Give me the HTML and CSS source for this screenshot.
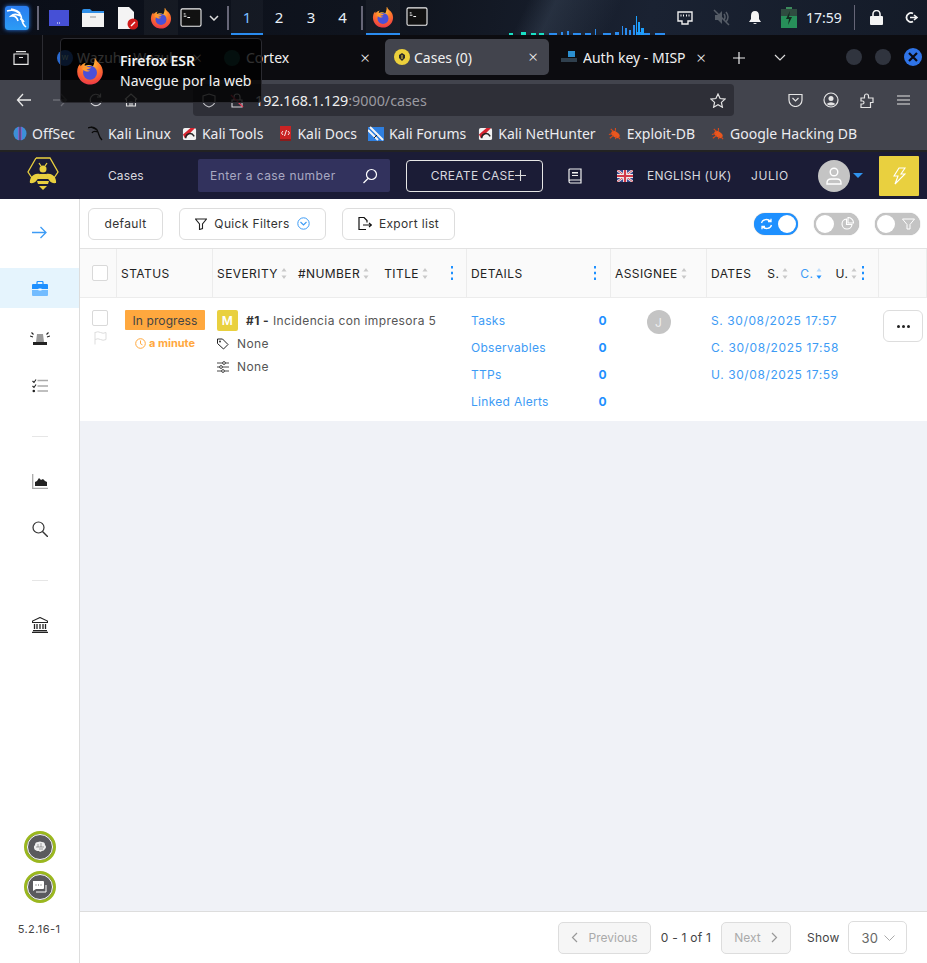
FILE: index.html
```html
<!DOCTYPE html>
<html lang="en">
<head>
    <meta charset="UTF-8">
    <meta name="viewport" content="width=device-width, initial-scale=1.0">
    <title>Cases (0)</title>
    <link rel="stylesheet" href="styles.css">
</head>
<body>

<svg class="defs" width="0" height="0">
    <defs>
        <radialGradient id="foxGrad" cx="0.5" cy="0.2" r="0.9">
            <stop offset="0" stop-color="#ffd23c"/>
            <stop offset="0.45" stop-color="#ff7a2a"/>
            <stop offset="1" stop-color="#e8284e"/>
        </radialGradient>
        <symbol id="firefox" viewBox="0 0 24 24">
            <path fill="url(#foxGrad)" d="M16.5 1c.6 2 2 3 3.500 4.500C22 7.500 23 10 23 13a11 11 0 1 1-21-5l1.500-2 .5 2c1-1.500 2.500-2.500 4.500-3-1 1-1.200 1.800-1 2.500 2-1 5-1 7 .5 1-2 1.500-4 1.500-7z"/>
            <circle cx="12" cy="13.500" r="6" fill="#4a50d8"/>
            <path fill="#ff9a2e" d="M5 10c2-1.500 5-2 8-1-1 1-2 1.500-4 1.500 1 1 2 1.200 3 1-1 1.500-4 1.500-7-1.500z"/>
        </symbol>
        <symbol id="terminal" viewBox="0 0 24 22">
            <rect x="1" y="1" width="22" height="19" rx="1.500" fill="#111" stroke="#f0f0f0" stroke-width="1.200"/>
            <path d="M4 9h3M4 6.500h2M8 10.500h3" stroke="#fff" stroke-width="1.100" fill="none"/>
        </symbol>
        <symbol id="kalitool" viewBox="0 0 16 16">
            <rect x="1" y="2" width="14" height="13" rx="2" fill="#f2f2f2"/>
            <path d="M1 9L9 2h5L3 13z" fill="#d5232f"/>
            <path d="M4 13c0-5 6-7 9-2" stroke="#222" stroke-width="1.600" fill="none"/>
        </symbol>
        <symbol id="bug" viewBox="0 0 16 16">
            <ellipse cx="9" cy="9" rx="5" ry="3" transform="rotate(35 9 9)" fill="#e8571f"/>
            <path d="M2 9l4-1M4 3l3 3M9 2l0 3M3 13l4-3M9 14l1-3M14 14l-2-2" stroke="#d8491a" stroke-width="1.200"/>
        </symbol>
        <symbol id="sorter" viewBox="0 0 6 11">
            <path d="M3 0l2.500 3.500h-5zM3 11L.5 7.500h5z" fill="#c9c9c9"/>
        </symbol>
        <symbol id="dots" viewBox="0 0 4 16">
            <path d="M1 1h2v2.500H1zM1 6.700h2v2.500H1zM1 12.500h2V15H1z" fill="#1e90ff"/>
        </symbol>
    </defs>
</svg>

<!-- desktop panel -->
<header class="panel">
    <div class="panel-left">
        <span class="kali-btn">
            <svg width="22" height="22" viewBox="0 0 22 22"><path d="M1 4c6-2 12 0 14 5 1 3 0 7 5 11M15 9c-4-2-8-2-10 0 3-.5 6 1 7 5M5 2c3 1 6 1 9 4M14 12c2 0 3 1 4 3" fill="none" stroke="#fff" stroke-width="1.600"/></svg>
        </span>
        <i class="panel-sep first"></i>
        <span class="launcher l-desk"><svg width="22" height="18" viewBox="0 0 22 18"><path d="M1 1h20v16H1z" fill="#4650d6"/><path d="M9 14h4" stroke="#fff" stroke-dasharray="1 1"/></svg></span>
        <span class="launcher"><svg width="22" height="19" viewBox="0 0 22 19"><path d="M0 3q0-2 2-2h6l2 2h12v3H0z" fill="#2f8fe8"/><path d="M0 5h22v14H0z" fill="#f2f2f2"/><path d="M8 9h6" stroke="#999"/></svg></span>
        <span class="launcher"><svg width="22" height="24" viewBox="0 0 22 24"><path d="M2 1h11l5 5v17H2z" fill="#f4f4f4"/><circle cx="17" cy="18" r="5.500" fill="#d01b1b"/><path d="M15 20l4-4" stroke="#fff" stroke-width="1.500"/></svg></span>
        <span class="launcher launcher-on"><svg width="22" height="22"><use href="#firefox"/></svg></span>
        <span class="launcher term"><svg width="22" height="20"><use href="#terminal"/></svg></span>
        <span class="launcher chev"><svg width="10" height="6" viewBox="0 0 10 6"><path d="M1 1l4 4 4-4" fill="none" stroke="#ddd" stroke-width="1.500"/></svg></span>
        <i class="panel-sep"></i>
        <span class="workspace active">1</span>
        <span class="workspace">2</span>
        <span class="workspace">3</span>
        <span class="workspace last">4</span>
        <i class="panel-sep"></i>
        <span class="window-btn active"><svg width="22" height="22"><use href="#firefox"/></svg></span>
        <span class="window-btn"><svg width="22" height="20"><use href="#terminal"/></svg></span>
    </div>
    <div class="panel-right">
        <svg class="netgraph" width="158" height="27" viewBox="0 0 158 27">
            <path d="M0 25h4v2H0zM12 24h5v3h-5zM22 25h5v2h-5zM30 25h5v2h-5z" fill="#19e0c4"/>
            <path d="M40 25h8v2h-8zM52 24h2v3h-2zM58 23h2v4h-2zM64 25h8v2h-8zM76 25h6v2h-6zM86 21h1v6h-1zM94 25h8v2h-8zM106 24h4v3h-4zM113 18h1v9h-1zM116 20h2v7h-2zM120 22h2v5h-2zM124 17h2v10h-2zM128 24h4v3h-4zM135 25h6v2h-6zM146 25h10v2h-10z" fill="#2a8cf0"/>
            <path d="M127 8h1v19h-1zM129 14h2v13h-2zM132 20h3v7h-3z" fill="#1ca0ff"/>
        </svg>
        <span class="tray t-net"><svg width="16" height="14" viewBox="0 0 16 14"><path d="M1 1h14v9h-4v3H5v-3H1z" fill="none" stroke="#eee" stroke-width="1.400"/><path d="M4 3.500v2M6.500 3.500v2M9.500 3.500v2M12 3.500v2" stroke="#eee"/></svg></span>
        <span class="tray t-mute"><svg width="18" height="17" viewBox="0 0 18 17"><path d="M3 6h3l4-4v13l-4-4H3z" fill="#555c66"/><path d="M12 5q2 3 0 6M14 3q4 5 0 10M2 1l15 15" fill="none" stroke="#555c66" stroke-width="1.500"/></svg></span>
        <span class="tray t-bell"><svg width="14" height="15" viewBox="0 0 14 15"><path d="M7 1q4 0 4 5v3l2 3H1l2-3V6q0-5 4-5zM5 13h4q-2 2-4 0z" fill="#f4f4f4"/></svg></span>
        <span class="tray t-bat"><svg width="16" height="21" viewBox="0 0 16 21"><path d="M5 0h6v2H5z" fill="#3d8c5d"/><path d="M0 2h16v8H0z" fill="#2f4c40"/><path d="M0 9h16v12H0z" fill="#27905a"/><path d="M9 4l-4 8h3l-1 6 4-8H8z" fill="#13291e"/></svg></span>
        <span class="clock">17:59</span>
        <i class="panel-sep"></i>
        <span class="tray t-lock"><svg width="13" height="15" viewBox="0 0 13 15"><path d="M3 6V4a3.500 3.500 0 0 1 7 0v2" fill="none" stroke="#f4f4f4" stroke-width="1.600"/><rect y="6" width="13" height="9" rx="1" fill="#f4f4f4"/></svg></span>
        <span class="tray t-power"><svg width="15" height="13" viewBox="0 0 15 13"><path d="M9 2.500a4.500 4.500 0 1 0 0 8" fill="none" stroke="#f4f4f4" stroke-width="1.800"/><path d="M6 6.500h6M10 4l3 2.500L10 9" fill="none" stroke="#f4f4f4" stroke-width="1.600"/></svg></span>
    </div>
</header>

<!-- browser tabs -->
<nav class="tabbar">
    <span class="view-btn"><svg width="16" height="14" viewBox="0 0 16 14"><path d="M3 .7h10M1 3h14v10.300H1zM6 6.500h4" fill="none" stroke="#e6e6e6" stroke-width="1.200"/></svg></span>
    <div class="tab t-wazuh">
        <span class="favicon fav-wazuh">W</span>
        <span class="tab-label">Wazuh - Wazuh</span>
        <span class="tab-close">&times;</span>
    </div>
    <div class="tab t-cortex">
        <span class="favicon fav-cortex"></span>
        <span class="tab-label">Cortex</span>
        <span class="tab-close">&times;</span>
    </div>
    <div class="tab t-cases active">
        <span class="favicon fav-cases"><svg width="16" height="16" viewBox="0 0 16 16"><circle cx="8" cy="8" r="8" fill="#ecd03c"/><path d="M8 4l3 2v3l-3 3-3-3V6z" fill="#2a2a2a"/><path d="M8 6v4" stroke="#ecd03c"/></svg></span>
        <span class="tab-label">Cases (0)</span>
        <span class="tab-close">&times;</span>
    </div>
    <div class="tab t-misp">
        <span class="favicon fav-misp"><svg width="16" height="14" viewBox="0 0 16 14"><path d="M7 0h7v6H7z" fill="#2b8fd0"/><path d="M0 7h16v4H0z" fill="#30404e"/></svg></span>
        <span class="tab-label">Auth key - MISP</span>
        <span class="tab-close">&times;</span>
    </div>
    <span class="tab-plus"><svg width="12" height="12" viewBox="0 0 12 12"><path d="M6 0v12M0 6h12" stroke="#eee" stroke-width="1.200"/></svg></span>
    <span class="tab-list"><svg width="12" height="7" viewBox="0 0 12 7"><path d="M1 1l5 5 5-5" fill="none" stroke="#ddd" stroke-width="1.200"/></svg></span>
    <div class="win-btns">
        <span class="win-btn"></span>
        <span class="win-btn"></span>
        <span class="win-btn close"><svg width="10" height="10" viewBox="0 0 10 10"><path d="M1 1l8 8M9 1l-8 8" stroke="#0b0b14" stroke-width="2.200"/></svg></span>
    </div>
</nav>

<!-- address bar -->
<div class="toolbar">
    <span class="tool t-back"><svg width="16" height="14" viewBox="0 0 16 14"><path d="M15 7H2M7 1L1.500 7 7 13" fill="none" stroke="#e8e8e8" stroke-width="1.300"/></svg></span>
    <span class="tool dim"><svg width="16" height="14" viewBox="0 0 16 14"><path d="M1 7h13M9 1l5.500 6L9 13" fill="none" stroke="#6b6c74" stroke-width="1.300"/></svg></span>
    <span class="tool"><svg width="14" height="14" viewBox="0 0 14 14"><path d="M12.500 8a5.700 5.700 0 1 1-1.500-5M11.500 .5V4H8" fill="none" stroke="#d0d0d4" stroke-width="1.200"/></svg></span>
    <span class="tool"><svg width="14" height="14" viewBox="0 0 14 14"><path d="M1 6.500L7 1l6 5.500M2.500 6v7h9V6M6 13V9h2v4" fill="none" stroke="#e0e0e0" stroke-width="1.100"/></svg></span>
    <div class="urlbar">
        <svg class="url-shield" width="14" height="15" viewBox="0 0 14 15"><path d="M7 1l6 2v5q0 4-6 6-6-2-6-6V3z" fill="none" stroke="#c8c8cc" stroke-width="1.100"/></svg>
        <svg class="url-lock" width="14" height="15" viewBox="0 0 14 15"><path d="M4 7V4a3 3 0 0 1 6 0v3M2 7h10v7H2z" fill="none" stroke="#d8d8dc" stroke-width="1.100"/><path d="M1 2l12 12" stroke="#e0405a" stroke-width="1.200"/></svg>
        <span class="url-text">192.168.1.129<span class="url-rest">:9000/cases</span></span>
        <svg class="url-star" width="16" height="15" viewBox="0 0 16 15"><path d="M8 1l2.100 4.500 4.900.6-3.600 3.300 1 4.800L8 11.800l-4.400 2.400 1-4.800L1 6.100l4.900-.6z" fill="none" stroke="#e4e4e4" stroke-width="1.200"/></svg>
    </div>
    <div class="tool-right">
        <span class="tool"><svg width="15" height="14" viewBox="0 0 15 14"><path d="M1 1.500h13V7a6.500 6.500 0 0 1-13 0zM4.500 5l3 3 3-3" fill="none" stroke="#e4e4e4" stroke-width="1.200"/></svg></span>
        <span class="tool"><svg width="16" height="16" viewBox="0 0 16 16"><circle cx="8" cy="8" r="7" fill="none" stroke="#e4e4e4" stroke-width="1.200"/><circle cx="8" cy="6.500" r="2.500" fill="#e4e4e4"/><path d="M3.500 12q4.500-3.500 9 0-4.500 3-9 0z" fill="#e4e4e4"/></svg></span>
        <span class="tool"><svg width="14" height="15" viewBox="0 0 14 15"><path d="M1 5h3.500V3a2 2 0 0 1 4 0v2H13v4.500h-2.500v5H1V11h1.500a1.500 1.500 0 0 0 0-3H1z" fill="none" stroke="#e4e4e4" stroke-width="1.200"/></svg></span>
        <span class="tool"><svg width="13" height="10" viewBox="0 0 13 10"><path d="M0 1h13M0 5h13M0 9h13" stroke="#e4e4e4" stroke-width="1.200"/></svg></span>
    </div>
</div>

<!-- bookmarks -->
<div class="bookmarks">
    <a class="bm b1"><svg width="14" height="15" viewBox="0 0 14 15"><ellipse cx="7" cy="7.500" rx="6.500" ry="7" fill="#3c8fd8"/><path d="M5 1h4v13H5z" fill="#7d64c8"/><path d="M6.600 0h.8v15h-.8z" fill="#2b2c33"/></svg>OffSec</a>
    <a class="bm b2"><svg width="15" height="15" viewBox="0 0 15 15"><path d="M0 2c5-2 9 0 10 4 1 3 1 5 4 8M10 6C7 5 5 5 4 7M3 1c2 1 4 1 6 3" fill="none" stroke="#0b0b0b" stroke-width="1.300"/></svg>Kali Linux</a>
    <a class="bm b3"><svg width="15" height="15"><use href="#kalitool"/></svg>Kali Tools</a>
    <a class="bm b4"><svg width="13" height="15" viewBox="0 0 13 15"><path d="M1 0h11v13H1z" fill="#c92323"/><path d="M1 13h11v2H1z" fill="#8a1c1c"/><path d="M4 5L2.500 7 4 9M9 5l1.500 2L9 9M7.500 4l-2 6" fill="none" stroke="#fff" stroke-width=".9"/></svg>Kali Docs</a>
    <a class="bm b5"><svg width="16" height="15" viewBox="0 0 16 15"><path d="M0 1h16v14H0z" fill="#2e7fe0"/><path d="M2 1l13 13M0 4l10 10" stroke="#f4f4f4" stroke-width="2"/><path d="M6 12l3-3" stroke="#222"/></svg>Kali Forums</a>
    <a class="bm b6"><svg width="15" height="15"><use href="#kalitool"/></svg>Kali NetHunter</a>
    <a class="bm b7"><svg width="15" height="15"><use href="#bug"/></svg>Exploit-DB</a>
    <a class="bm b8"><svg width="15" height="15"><use href="#bug"/></svg>Google Hacking DB</a>
</div>

<!-- TheHive app -->
<div class="app-head">
    <span class="logo">
        <svg width="32" height="37" viewBox="0 0 32 37">
            <path d="M9 1h14l8 14-4 6M5 21L1 15 9 1" fill="none" stroke="#e9d03f" stroke-width="1.300"/>
            <path d="M12 6l2 3M20 6l-2 3" stroke="#e9d03f" stroke-width="1.300"/>
            <circle cx="16" cy="12" r="3.500" fill="#e9d03f"/>
            <path d="M13 17C6 15 2 22 3 26c5 1 8-3 10-9zM19 17c7-2 11 5 10 9-5 1-8-3-10-9z" fill="#e9d03f"/>
            <path d="M12.500 17h7l2 5h-11zM10 24h12l-1 3H11zM12 29h8l-4 4z" fill="#e9d03f"/>
        </svg>
    </span>
    <span class="head-cases">Cases</span>
    <div class="head-search">
        <span>Enter a case number</span>
        <svg width="16" height="16" viewBox="0 0 16 16"><circle cx="9.500" cy="6.500" r="5" fill="none" stroke="#fff" stroke-width="1.200"/><path d="M6 10.500L1.500 15" stroke="#fff" stroke-width="1.200"/></svg>
    </div>
    <button class="create-btn">CREATE CASE<svg width="11" height="11" viewBox="0 0 11 11"><path d="M5.500 0v11M0 5.500h11" stroke="#ddd" stroke-width="1.100"/></svg></button>
    <span class="head-book"><svg width="14" height="16" viewBox="0 0 14 16"><path d="M1 13V2q0-1 1-1h11v11H2.500Q1 12 1 13.500T2.500 15H13v-3" fill="none" stroke="#f0f0f0" stroke-width="1.200"/><path d="M4 4h6v1.500H4zM4 7h6v1H4z" fill="#f0f0f0"/></svg></span>
    <span class="head-flag"><svg width="16" height="12" viewBox="0 0 16 12"><path d="M0 0h16v12H0z" fill="#3a4a90"/><path d="M0 0l16 12M16 0L0 12" stroke="#eee" stroke-width="2.400"/><path d="M0 0l16 12M16 0L0 12" stroke="#d23a4a" stroke-width=".9"/><path d="M8 0v12M0 6h16" stroke="#eee" stroke-width="4"/><path d="M8 0v12M0 6h16" stroke="#d23a4a" stroke-width="2.200"/></svg></span>
    <span class="head-lang">ENGLISH (UK)</span>
    <span class="head-user">JULIO</span>
    <span class="avatar"><svg width="16" height="18" viewBox="0 0 16 18"><circle cx="8" cy="5" r="3.800" fill="none" stroke="#fff" stroke-width="1.400"/><path d="M1 17v-1q0-4 4-4h6q4 0 4 4v1z" fill="none" stroke="#fff" stroke-width="1.400"/></svg></span>
    <i class="caret"></i>
    <span class="bolt"><svg width="14" height="18" viewBox="0 0 14 18"><path d="M7 1h6L9 7h4L3 17l3-8H2z" fill="none" stroke="#fff" stroke-width="1.100"/></svg></span>
</div>

<div class="app-body">
    <aside class="sidebar">
        <div class="side-arrow"><svg width="15" height="13" viewBox="0 0 15 13"><path d="M0 6.500h14M8.500 1L14 6.500 8.500 12" fill="none" stroke="#3d9bf5" stroke-width="1.300"/></svg></div>
        <div class="side-item active"><svg width="16" height="15" viewBox="0 0 16 15"><path d="M5 3V1.500Q5 .5 6 .5h4q1 0 1 1V3" fill="none" stroke="#1e90ff" stroke-width="1.200"/><path d="M1 3h14q1 0 1 1v4H0V4q0-1 1-1z" fill="#1e90ff"/><path d="M0 9h16v5q0 1-1 1H1q-1 0-1-1z" fill="#73bcff"/><path d="M6.500 7.500h3v2h-3z" fill="#fff"/></svg></div>
        <div class="side-item item-first"><svg width="20" height="14" viewBox="0 0 20 14"><path d="M7 3h6l1 8H6z" fill="#9a9a9a"/><path d="M3 11h14v3H3z" fill="#222"/><path d="M0 5l3 1M1.500 1.500l2 2M20 5l-3 1M18.500 1.500l-2 2" stroke="#222" stroke-width="1.100"/></svg></div>
        <div class="side-item"><svg width="16" height="14" viewBox="0 0 16 14"><path d="M.5 2l1.500 1.500L4 .5M.5 7l1.500 1.500L4 5.500" fill="none" stroke="#222" stroke-width="1.100"/><circle cx="1.800" cy="12" r="1.300" fill="#222"/><path d="M5.500 1.500H16M5.500 7H16M5.500 12H16" stroke="#aaa" stroke-width="1.400"/></svg></div>
        <hr class="side-rule rule-a">
        <div class="side-item item-gap"><svg width="16" height="15" viewBox="0 0 16 15"><path d="M.7 0v14.300H16" fill="none" stroke="#aaa" stroke-width="1.300"/><path d="M3 12V8l2-1 2-3 2 2 2-1 2 2 2 1v4z" fill="#222"/></svg></div>
        <div class="side-item"><svg width="16" height="16" viewBox="0 0 16 16"><circle cx="6.500" cy="6.500" r="5.500" fill="none" stroke="#333" stroke-width="1.200"/><path d="M10.500 10.500L16 16" stroke="#333" stroke-width="1.400"/></svg></div>
        <hr class="side-rule rule-b">
        <div class="side-item item-gap"><svg width="16" height="16" viewBox="0 0 16 16"><path d="M8 .5L15.500 4v1.500H.5V4z" fill="none" stroke="#222" stroke-width="1.100"/><path d="M2.500 7v5M5 7v5M8 7v5M11 7v5M13.500 7v5" stroke="#222" stroke-width="1.300"/><path d="M1 13h14v1.200H1zM0 14.800h16V16H0z" fill="#222"/></svg></div>
        <div class="side-bottom">
            <span class="side-round"><svg width="14" height="12" viewBox="0 0 14 12"><path d="M2 4q0-3 3-3 2-1 4 0 3 0 3 3 2 2 0 4-1 2-3 2l-2 1-1-1H4Q1 9 1 7q-.5-2 1-3z" fill="#eee"/><path d="M5 3v3M8 2v4M3 6h8M6 8h4" stroke="#666" stroke-width=".6"/></svg></span>
            <span class="side-round"><svg width="15" height="13" viewBox="0 0 15 13"><path d="M1 0h10q1 0 1 1v6q0 1-1 1H4L1 10z" fill="#fff"/><path d="M14 4v7H4" fill="none" stroke="#fff" stroke-width="1"/><path d="M3.500 4h1M6 4h1M8.500 4h1" stroke="#555" stroke-width="1.200"/></svg></span>
            <span class="version">5.2.16-1</span>
        </div>
    </aside>

    <main class="content">
        <div class="list-tools">
            <button class="tool-btn btn-default">default</button>
            <button class="tool-btn btn-quick">
                <svg width="12" height="12" viewBox="0 0 12 12"><path d="M.5 1h11L7.500 6v4.500l-3 1V6z" fill="none" stroke="#222" stroke-width="1.100"/></svg>
                Quick Filters
                <svg width="13" height="13" viewBox="0 0 13 13"><circle cx="6.500" cy="6.500" r="5.700" fill="none" stroke="#3d9bf5" stroke-width="1"/><path d="M3.500 5l3 3 3-3" fill="none" stroke="#3d9bf5" stroke-width="1.100"/></svg>
            </button>
            <button class="tool-btn btn-export">
                <svg width="14" height="13" viewBox="0 0 14 13"><path d="M8 12.500H1V.5h5l3 3v2" fill="none" stroke="#111" stroke-width="1.200"/><path d="M5 8h8M11 6l2.500 2-2.500 2" fill="none" stroke="#111" stroke-width="1.100"/></svg>
                Export list
            </button>
            <div class="toggles">
                <span class="toggle on"><svg width="13" height="12" viewBox="0 0 13 12"><path d="M1.500 5a5 4.500 0 0 1 9-1.500M11.500 7a5 4.500 0 0 1-9 1.500M8 3.500h3V.7M5 8.500H2v2.800" fill="none" stroke="#fff" stroke-width="1.300"/></svg><i></i></span>
                <span class="toggle"><i></i><svg width="13" height="13" viewBox="0 0 13 13"><path d="M5.500 2a5 5 0 1 0 5.500 5.500H5.500zM7 .5a5.500 5.500 0 0 1 5.500 5.500H7z" fill="none" stroke="#fff" stroke-width="1.100"/></svg></span>
                <span class="toggle"><i></i><svg width="13" height="12" viewBox="0 0 13 12"><path d="M.5 1h12L8 6.500V11H5V6.500z" fill="none" stroke="#fff" stroke-width="1"/></svg></span>
            </div>
        </div>

        <div class="case-table">
            <div class="th th-check"><span class="check"></span></div>
            <div class="th">STATUS</div>
            <div class="th th-title">
                <span class="sort s-sev">SEVERITY<svg width="6" height="11"><use href="#sorter"/></svg></span>
                <span class="sort s-num">#NUMBER<svg width="6" height="11"><use href="#sorter"/></svg></span>
                <span class="sort s-ttl">TITLE<svg width="6" height="11"><use href="#sorter"/></svg></span>
                <svg class="col-menu" width="4" height="16"><use href="#dots"/></svg>
            </div>
            <div class="th th-details">DETAILS<svg class="col-menu" width="4" height="16"><use href="#dots"/></svg></div>
            <div class="th"><span class="sort">ASSIGNEE<svg width="6" height="11"><use href="#sorter"/></svg></span></div>
            <div class="th th-dates">
                <span class="sort s-dates">DATES</span>
                <span class="sort s-s">S.<svg width="6" height="11"><use href="#sorter"/></svg></span>
                <span class="sort s-c">C.<svg width="6" height="11" viewBox="0 0 6 11"><path d="M3 0l2.500 3.500h-5z" fill="#bcdcfb"/><path d="M3 11L.5 7.500h5z" fill="#1e90ff"/></svg></span>
                <span class="sort s-u">U.<svg width="6" height="11"><use href="#sorter"/></svg></span>
                <svg class="col-menu" width="4" height="16"><use href="#dots"/></svg>
            </div>
            <div class="th th-end"></div>

            <div class="td td-check">
                <span class="check"></span>
                <svg width="13" height="14" viewBox="0 0 13 14"><path d="M1 1v12.500M1 1.500q3-1.500 5.500 0t5.500 0v7q-3 1.500-5.500 0T1 8.500" fill="none" stroke="#ddd" stroke-width="1"/></svg>
            </div>
            <div class="td td-status">
                <span class="badge">In progress</span>
                <span class="since"><svg width="11" height="11" viewBox="0 0 11 11"><circle cx="5.500" cy="5.500" r="4.800" fill="none" stroke="#ffa83e" stroke-width="1"/><path d="M5.500 2.500v3.200l2 1.200" fill="none" stroke="#ffa83e" stroke-width="1"/></svg>a minute</span>
            </div>
            <div class="td td-title">
                <div class="title-line"><span class="sev">M</span><b>#1 -</b> Incidencia con impresora 5</div>
                <div class="meta-line"><svg width="12" height="12" viewBox="0 0 12 12"><path d="M.5 1h5l5.500 5.500-4.500 4.500L.5 5.500z" fill="none" stroke="#222" stroke-width="1"/><circle cx="3" cy="3.500" r=".9" fill="#222"/></svg>None</div>
                <div class="meta-line"><svg width="12" height="12" viewBox="0 0 12 12"><path d="M0 2h12M0 6h12M0 10h12" stroke="#333" stroke-width=".9"/><circle cx="7" cy="2" r="1.400" fill="#fff" stroke="#333" stroke-width=".9"/><circle cx="4" cy="6" r="1.400" fill="#fff" stroke="#333" stroke-width=".9"/><circle cx="6" cy="10" r="1.400" fill="#fff" stroke="#333" stroke-width=".9"/></svg>None</div>
            </div>
            <div class="td td-details">
                <div class="stat"><span>Tasks</span><b>0</b></div>
                <div class="stat"><span>Observables</span><b>0</b></div>
                <div class="stat"><span>TTPs</span><b>0</b></div>
                <div class="stat"><span>Linked Alerts</span><b>0</b></div>
            </div>
            <div class="td td-assignee"><span class="initial">J</span></div>
            <div class="td td-dates">
                <div>S. 30/08/2025 17:57</div>
                <div>C. 30/08/2025 17:58</div>
                <div>U. 30/08/2025 17:59</div>
            </div>
            <div class="td td-actions"><button class="more-btn"><i></i><i></i><i></i></button></div>
        </div>

        <div class="spacer"></div>

        <footer class="pager">
            <button class="page-btn prev"><svg width="7" height="11" viewBox="0 0 7 11"><path d="M6 1L1.500 5.500 6 10" fill="none" stroke="#999" stroke-width="1.200"/></svg>Previous</button>
            <span class="page-count">0 - 1 of 1</span>
            <button class="page-btn next">Next<svg width="7" height="11" viewBox="0 0 7 11"><path d="M1 1l4.500 4.500L1 10" fill="none" stroke="#999" stroke-width="1.200"/></svg></button>
            <span class="page-show">Show</span>
            <span class="page-size">30<svg width="11" height="6" viewBox="0 0 11 6"><path d="M.5.5l5 5 5-5" fill="none" stroke="#aaa"/></svg></span>
        </footer>
    </main>
</div>

<!-- launcher tooltip -->
<div class="fox-tip">
    <svg width="28" height="28"><use href="#firefox"/></svg>
    <div>
        <strong>Firefox ESR</strong>
        <span>Navegue por la web</span>
    </div>
</div>

</body>
</html>
```

FILE: styles.css
```css
* {
    margin: 0;
    padding: 0;
    box-sizing: border-box;
}
body {
    width: 927px;
    height: 963px;
    overflow: hidden;
    position: relative;
    display: flex;
    flex-direction: column;
    font-family: Inter, "Noto Sans", sans-serif;
    background-color: #f0f2f7;
    color: #222;
}
.defs {
    position: absolute;
}
svg {
    display: block;
    flex-shrink: 0;
}

/* Desktop panel */
.panel {
    height: 35px;
    display: flex;
    justify-content: space-between;
    font-family: "Noto Sans", sans-serif;
    color: #e8f0f8;
    background:
        linear-gradient(115deg, transparent 56%, rgba(70, 85, 105, 0.35) 59%, transparent 66%),
        linear-gradient(100deg, #0a0e18 0%, #10151f 45%, #1a2232 70%, #141b28 100%);
}
.panel-left,
.panel-right {
    display: flex;
    align-items: center;
}
.kali-btn {
    width: 24px;
    height: 24px;
    margin-left: 5px;
    display: flex;
    align-items: center;
    justify-content: center;
    background: linear-gradient(#2a7df0, #2c9cf5);
    border-radius: 3px;
    box-shadow: 0 0 4px #2a7df0;
}
.panel-sep {
    width: 2px;
    height: 24px;
    background-color: #667;
}
.panel-sep.first {
    margin-left: 8px;
}
.launcher {
    width: 34px;
    height: 35px;
    display: flex;
    align-items: center;
    justify-content: center;
}
.launcher.l-desk {
    margin-left: 3px;
}
.launcher-on {
    background-color: rgba(255, 255, 255, 0.04);
}
.launcher.term {
    width: 26px;
}
.launcher.chev {
    width: 20px;
    margin-right: 3px;
}
.workspace {
    width: 32px;
    height: 35px;
    display: flex;
    align-items: center;
    justify-content: center;
    font-size: 15px;
    padding-top: 1px;
    border-bottom: 2px solid transparent;
}
.panel-sep + .workspace {
    margin-left: 2px;
}
.workspace.active {
    background-color: rgba(255, 255, 255, 0.03);
    border-bottom-color: #2a8cf0;
    color: #7cc0ff;
}
.workspace.last {
    margin-right: 3px;
    width: 31px;
}
.window-btn {
    width: 34px;
    height: 35px;
    display: flex;
    align-items: center;
    justify-content: center;
    border-bottom: 2px solid transparent;
}
.panel-sep + .window-btn {
    margin-left: 3px;
}
.window-btn.active {
    background-color: rgba(255, 255, 255, 0.03);
    border-bottom-color: #2a8cf0;
}
.netgraph {
    margin-top: 8px;
    margin-right: 5px;
}
.tray {
    display: flex;
    justify-content: center;
}
.t-net { width: 26px; }
.t-mute { width: 46px; }
.t-bell { width: 22px; }
.t-bat { width: 46px; }
.t-lock { width: 34px; margin-left: 4px; }
.t-power { width: 36px; margin-right: -2px; }
.clock {
    font-size: 14px;
    width: 44px;
    text-align: center;
    margin-right: 8px;
    margin-left: -10px;
}
.panel-right .panel-sep {
    width: 1px;
    height: 25px;
}

/* Browser tabs */
.tabbar {
    height: 45px;
    display: flex;
    align-items: center;
    background-color: #0c0c10;
    font-family: "Noto Sans", sans-serif;
    font-size: 14px;
    color: #f0f0f0;
}
.view-btn {
    width: 43px;
    height: 45px;
    display: flex;
    align-items: center;
    justify-content: center;
    border-right: 1px solid #2c2c32;
}
.tab {
    height: 36px;
    display: flex;
    align-items: center;
    border-radius: 5px;
}
.t-wazuh { width: 166px; padding-left: 11px; margin-left: 3px; }
.t-cortex { width: 169px; padding-left: 12px; margin-right: 4px; }
.t-cases { width: 164px; padding-left: 9px; background-color: #42444d; margin-top: -1px; }
.t-misp { width: 164px; padding-left: 12px; }
.favicon {
    width: 16px;
    height: 16px;
    margin-right: 4px;
    display: flex;
    align-items: center;
    justify-content: center;
    flex-shrink: 0;
}
.fav-wazuh {
    border-radius: 50%;
    background-color: #2a6ad0;
    font-size: 7px;
    color: #cfe;
}
.fav-cortex {
    border-radius: 50%;
    background-color: #1e7a6a;
    margin-right: 6px;
    opacity: 0.6;
}
.fav-misp { margin-right: 6px; }
.tab-label {
    flex: 1;
    white-space: nowrap;
    overflow: hidden;
}
.tab-close {
    width: 16px;
    text-align: center;
    font-size: 17px;
    line-height: 16px;
    margin-right: 8px;
    font-weight: 300;
}
.t-wazuh .tab-close { margin-right: 7px; }
.t-misp .tab-close { margin-right: 4px; }
.tab-plus {
    margin-left: 20px;
    width: 14px;
}
.tab-list {
    margin-left: 27px;
}
.win-btns {
    margin-left: auto;
    margin-right: 5px;
    display: flex;
    gap: 13px;
}
.win-btn {
    width: 16px;
    height: 16px;
    border-radius: 50%;
    background-color: #30343e;
    display: flex;
    align-items: center;
    justify-content: center;
}
.win-btn.close {
    background-color: #2f74e8;
    width: 18px;
    height: 18px;
    margin-top: -1px;
}

/* Address bar */
.toolbar {
    height: 37px;
    display: flex;
    align-items: center;
    background-color: #42444d;
    padding: 3px 0 0 6px;
}
.tool {
    width: 36px;
    display: flex;
    justify-content: center;
}
.toolbar > .tool:nth-child(4) {
    width: 34px;
}
.urlbar {
    width: 541px;
    height: 32px;
    margin-left: 45px;
    padding-left: 9px;
    display: flex;
    align-items: center;
    background-color: #2e2f37;
    border-radius: 4px;
    font-family: "Noto Sans", sans-serif;
    font-size: 14.300px;
    color: #f0f0f0;
}
.url-shield { margin-right: 14px; }
.url-lock { margin-right: 11px; }
.url-rest { color: #9a9aa0; }
.url-star { margin-left: auto; margin-right: 8px; }
.tool-right {
    display: flex;
    align-items: center;
    margin-left: 43px;
}

/* Bookmarks */
.bookmarks {
    height: 35px;
    display: flex;
    align-items: center;
    background-color: #42444d;
    font-family: "Noto Sans", sans-serif;
    font-size: 14px;
    color: #ececf0;
    padding-left: 13px;
    border-bottom: 2px solid #222;
}
.bm {
    display: flex;
    align-items: center;
    gap: 5px;
    white-space: nowrap;
}
.b2 { margin-left: 13px; }
.b3 { margin-left: 11px; }
.b4 { margin-left: 16px; }
.b5 { margin-left: 11px; }
.b6 { margin-left: 12px; }
.b7 { margin-left: 11px; }
.b8 { margin-left: 15px; }

/* App header */
.app-head {
    height: 47px;
    display: flex;
    align-items: center;
    background-color: #1b1c36;
    color: #d8d8df;
    font-size: 12px;
    letter-spacing: 0.1px;
}
.logo {
    margin-left: 27px;
}
.head-cases {
    margin-left: 49px;
    width: 90px;
}
.head-search {
    width: 192px;
    height: 33px;
    padding: 0 12px;
    display: flex;
    align-items: center;
    justify-content: space-between;
    background-color: #32325d;
    border-radius: 2px;
    color: #a9a9c2;
    letter-spacing: 0.45px;
}
.create-btn {
    width: 137px;
    height: 32px;
    margin-left: 16px;
    display: flex;
    align-items: center;
    justify-content: flex-end;
    padding-right: 16px;
    background: none;
    border: 1px solid #e6e6e6;
    border-radius: 4px;
    color: #d8d8df;
    font: inherit;
    letter-spacing: 0.3px;
}
.head-book { margin-left: 25px; }
.head-flag { margin-left: 35px; }
.head-lang { margin-left: 14px; width: 104px; letter-spacing: 0.3px; }
.head-user { width: 67px; letter-spacing: 0.55px; }
.avatar {
    width: 32px;
    height: 32px;
    border-radius: 50%;
    background-color: #c4c4c4;
    display: flex;
    align-items: center;
    justify-content: center;
}
.caret {
    margin-left: 3px;
    border: 5px solid transparent;
    border-top: 5px solid #2f93ef;
    border-bottom: 0;
}
.bolt {
    width: 40px;
    height: 40px;
    margin-left: 16px;
    display: flex;
    align-items: center;
    justify-content: center;
    background-color: #e9d03f;
    border-radius: 1px;
}

/* App layout */
.app-body {
    flex: 1;
    min-height: 0;
    display: flex;
}
.sidebar {
    width: 80px;
    display: flex;
    flex-direction: column;
    align-items: stretch;
    background-color: #fff;
    border-right: 1px solid #ddd;
}
.side-arrow {
    height: 66px;
    display: flex;
    align-items: center;
    justify-content: center;
}
.side-item {
    height: 48px;
    display: flex;
    align-items: center;
    justify-content: center;
}
.side-item.active {
    height: 40px;
    margin-top: 3px;
    background-color: #e5f4fd;
}
.side-item.item-first { margin-top: 6px; }
.side-item.item-gap { margin-top: 20px; }
.side-rule {
    border: 0;
    height: 1px;
    width: 16px;
    background-color: #e6e6e6;
    align-self: center;
}
.rule-a { margin-top: 26px; }
.rule-b { margin-top: 27px; }
.side-bottom {
    margin-top: auto;
    padding-bottom: 27px;
    display: flex;
    flex-direction: column;
    align-items: center;
    gap: 8px;
}
.side-round {
    width: 32px;
    height: 32px;
    border-radius: 50%;
    background-color: #5a5a5e;
    border: 3px solid #9ab71f;
    outline: 1px solid #fff;
    outline-offset: -4px;
    display: flex;
    align-items: center;
    justify-content: center;
}
.version {
    margin-top: 11px;
    font-size: 11px;
    letter-spacing: 0.4px;
    color: #444;
    margin-right: 1px;
}
.content {
    flex: 1;
    min-width: 0;
    display: flex;
    flex-direction: column;
}

/* List tools */
.list-tools {
    height: 50px;
    padding-left: 8px;
    display: flex;
    align-items: center;
    background-color: #fff;
    border-bottom: 1px solid #e2e2e2;
}
.tool-btn {
    height: 32px;
    display: flex;
    align-items: center;
    justify-content: center;
    gap: 7px;
    background-color: #fff;
    border: 1px solid #ddd;
    border-radius: 6px;
    font: inherit;
    font-size: 12px;
    letter-spacing: 0.35px;
    color: #333;
}
.btn-default { width: 75px; }
.btn-quick { width: 147px; margin-left: 16px; }
.btn-export { width: 113px; margin-left: 16px; }
.toggles {
    margin-left: auto;
    margin-right: 7px;
    display: flex;
    gap: 16px;
}
.toggle {
    width: 45px;
    height: 22px;
    border-radius: 11px;
    background-color: #c4c4c4;
    display: flex;
    align-items: center;
    justify-content: space-between;
    padding: 0 5px 0 2px;
    box-shadow: 0 0 1px #999;
}
.toggle i {
    width: 18px;
    height: 18px;
    border-radius: 50%;
    background-color: #fff;
}
.toggle.on {
    width: 44px;
    background-color: #1e90ff;
    padding: 0 2px 0 6px;
}

/* Case table */
.case-table {
    display: grid;
    grid-template-columns: 37px 96px 254px 144px 96px 172px 48px;
    grid-template-rows: 49px 123px;
    background-color: #fff;
    font-size: 12px;
}
.th {
    display: flex;
    align-items: center;
    padding-left: 4px;
    background-color: #fafafa;
    border-right: 1px solid #ececec;
    border-bottom: 1px solid #ececec;
    font-size: 12px;
    letter-spacing: 0.43px;
    color: #222;
}
.th-check {
    justify-content: center;
    padding: 0 0 0 3px;
}
.check {
    width: 16px;
    height: 16px;
    border: 1px solid #d9d9d9;
    border-radius: 2px;
    background-color: #fff;
    display: block;
}
.sort {
    display: inline-flex;
    align-items: center;
    gap: 3px;
    white-space: nowrap;
}
.s-num { margin-left: 11px; }
.s-ttl { margin-left: 15px; }
.s-s { margin-left: 16px; }
.s-c { margin-left: 12px; color: #3d9bf5; }
.s-u { margin-left: 13px; }
.col-menu {
    margin-left: auto;
    margin-right: 12px;
}
.th-details .col-menu,
.th-dates .col-menu { margin-right: 13px; }
.td {
    padding-top: 12px;
    font-size: 12px;
    letter-spacing: 0;
}
.td-check {
    display: flex;
    flex-direction: column;
    align-items: center;
    gap: 5px;
    padding-left: 3px;
}
.td-status {
    display: flex;
    flex-direction: column;
    align-items: center;
    gap: 6px;
}
.badge {
    width: 80px;
    height: 20px;
    display: flex;
    align-items: center;
    justify-content: center;
    background-color: #ffa83e;
    border-radius: 1px;
    color: #444;
    letter-spacing: 0.1px;
}
.since {
    display: flex;
    align-items: center;
    gap: 3px;
    font-size: 11px;
    font-weight: 700;
    color: #ffa83e;
}
.td-title {
    padding-left: 4px;
    color: #555;
    letter-spacing: 0.38px;
}
.title-line {
    display: flex;
    align-items: center;
    white-space: nowrap;
}
.title-line b {
    margin-right: 4px;
    color: #333;
}
.sev {
    width: 21px;
    height: 21px;
    margin-right: 8px;
    display: flex;
    align-items: center;
    justify-content: center;
    background-color: #e9d03f;
    border-radius: 2px;
    color: #fff;
    font-weight: 600;
}
.meta-line {
    display: flex;
    align-items: center;
    gap: 8px;
    height: 23px;
    margin-top: 1px;
}
.meta-line:nth-child(3) { margin-top: 0; }
.td-details {
    padding-left: 4px;
    padding-right: 4px;
    color: #3d9bf5;
    letter-spacing: 0.3px;
}
.stat {
    display: flex;
    justify-content: space-between;
    height: 20px;
    align-items: center;
    margin-bottom: 7px;
}
.stat b {
    font-weight: 700;
    color: #1e90ff;
}
.td-assignee {
    display: flex;
    justify-content: center;
    padding-right: 1px;
}
.initial {
    width: 24px;
    height: 24px;
    border-radius: 50%;
    display: flex;
    align-items: center;
    justify-content: center;
    background-color: #c4c4c4;
    color: #eee;
    font-size: 12px;
}
.td-dates {
    padding-left: 4px;
    color: #3d9bf5;
    white-space: nowrap;
    letter-spacing: 0.6px;
}
.td-dates div {
    height: 20px;
    display: flex;
    align-items: center;
    margin-bottom: 7px;
}
.td-actions {
    padding-left: 4px;
}
.more-btn {
    width: 40px;
    height: 32px;
    display: flex;
    align-items: center;
    justify-content: center;
    gap: 2px;
    background-color: #fff;
    border: 1px solid #ddd;
    border-radius: 6px;
}
.more-btn i {
    width: 3px;
    height: 3px;
    border-radius: 50%;
    background-color: #222;
}
.spacer {
    flex: 1;
}

/* Pager */
.pager {
    height: 52px;
    padding-left: 478px;
    display: flex;
    align-items: center;
    background-color: #fff;
    border-top: 1px solid #ddd;
    font-size: 12px;
    letter-spacing: 0.25px;
    color: #444;
}
.page-btn {
    height: 32px;
    display: flex;
    align-items: center;
    justify-content: center;
    gap: 10px;
    background-color: #f6f6f6;
    border: 1px solid #ddd;
    border-radius: 5px;
    font: inherit;
    color: #aaa;
}
.prev { width: 93px; }
.next { width: 70px; }
.page-count {
    width: 70px;
    text-align: center;
}
.page-show {
    margin-left: 16px;
}
.page-size {
    width: 59px;
    height: 33px;
    margin-left: 8px;
    padding: 0 11px 0 13px;
    display: flex;
    align-items: center;
    justify-content: space-between;
    border: 1px solid #ddd;
    border-radius: 5px;
    font-size: 13px;
    color: #666;
}

/* Tooltip */
.fox-tip {
    position: absolute;
    left: 60px;
    top: 38px;
    width: 202px;
    height: 65px;
    padding-left: 15px;
    display: flex;
    align-items: center;
    gap: 16px;
    background-color: rgba(0, 0, 0, 0.8);
    border: 1px solid #2a2a30;
    border-radius: 4px;
    font-family: "Noto Sans", sans-serif;
    font-size: 14px;
    color: #f2f2f2;
}
.fox-tip strong,
.fox-tip span {
    display: block;
    line-height: 20px;
}
.fox-tip strong {
    font-weight: 600;
}
```
